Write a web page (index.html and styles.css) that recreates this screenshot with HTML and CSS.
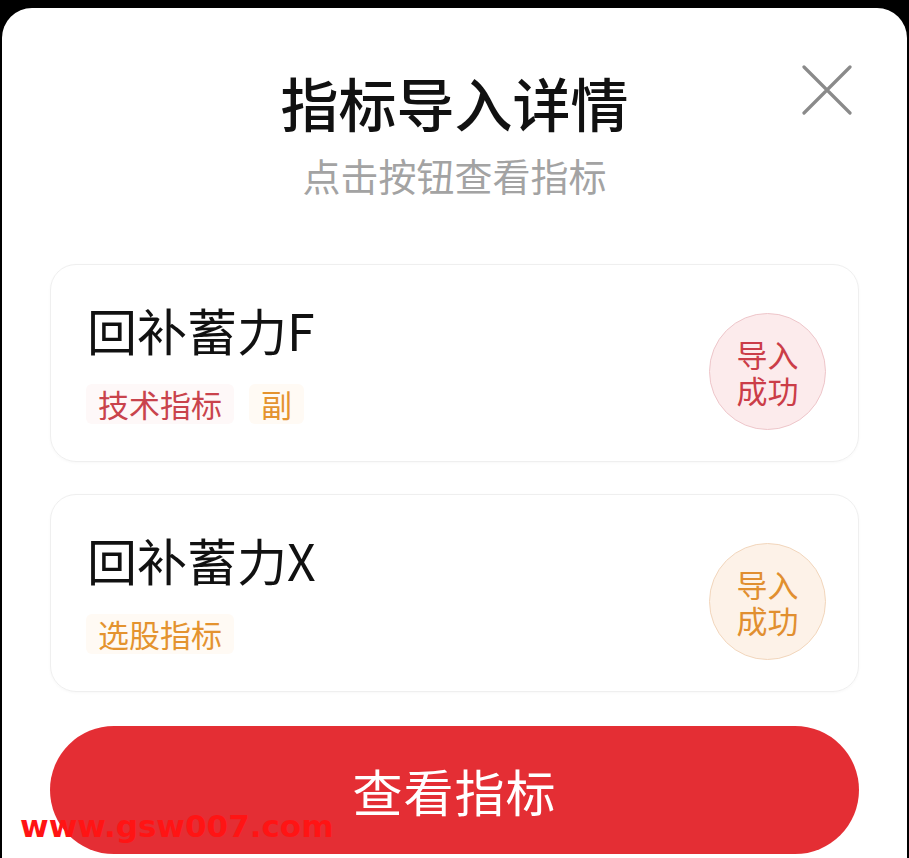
FILE: index.html
```html
<!DOCTYPE html>
<html lang="zh-CN">
<head>
<meta charset="utf-8">
<title>指标导入详情</title>
<link rel="stylesheet" href="styles.css">
</head>
<body>
<div class="modal">
  <button class="close" aria-label="关闭">
    <svg width="50" height="50" viewBox="0 0 50 50"><path d="M2 2 L48 48 M48 2 L2 48" stroke="#8a8a8a" stroke-width="3.2" stroke-linecap="round" fill="none"/></svg>
  </button>
  <h1 class="title">指标导入详情</h1>
  <p class="subtitle">点击按钮查看指标</p>

  <div class="list">
    <div class="card">
      <div class="info">
        <div class="name">回补蓄力F</div>
        <div class="tags">
          <span class="tag tag-red">技术指标</span>
          <span class="tag tag-orange">副</span>
        </div>
      </div>
      <div class="badge badge-red"><span class="bl">导入</span><span class="bl">成功</span></div>
    </div>
    <div class="card">
      <div class="info">
        <div class="name">回补蓄力X</div>
        <div class="tags">
          <span class="tag tag-orange">选股指标</span>
        </div>
      </div>
      <div class="badge badge-orange"><span class="bl">导入</span><span class="bl">成功</span></div>
    </div>
  </div>

  <button class="cta">查看指标</button>
</div>
<div class="watermark">www.gsw007.com</div>
</body>
</html>
```

FILE: styles.css
```css
* { box-sizing: border-box; }
html, body { margin: 0; padding: 0; }
body {
  background: #000;
  width: 909px;
  height: 858px;
  overflow: hidden;
  position: relative;
  font-family: "Noto Sans CJK SC", "Noto Sans", sans-serif;
}
.modal {
  position: relative;
  margin: 8px 2px 0 2px;
  height: 850px;
  background: #fff;
  border-radius: 30px 30px 0 0;
  padding: 65px 48px 0 48px;
}
.close {
  position: absolute;
  top: 57px;
  right: 55px;
  width: 50px;
  height: 50px;
  padding: 0;
  border: 0;
  background: none;
}
.close svg { display: block; }
.title {
  margin: 0;
  text-align: center;
  font-size: 58px;
  line-height: 58px;
  font-weight: 500;
  color: #111;
}
.subtitle {
  margin: 25px 0 0 0;
  text-align: center;
  font-size: 38px;
  line-height: 38px;
  color: #a3a3a3;
}
.list {
  margin-top: 70px;
  display: flex;
  flex-direction: column;
  gap: 32px;
}
.card {
  height: 198px;
  border: 1px solid #efefef;
  border-radius: 26px;
  box-shadow: 0 1px 3px rgba(0,0,0,0.03);
  padding: 39px 32px 0 36px;
  display: flex;
  justify-content: space-between;
  align-items: flex-start;
}
.name {
  font-size: 50px;
  line-height: 50px;
  color: #111;
  font-weight: 400;
}
.tags {
  margin-top: 30px;
  display: flex;
  gap: 15px;
  margin-left: -1px;
}
.tag {
  height: 40px;
  line-height: 40px;
  font-size: 31px;
  padding: 0 12px;
  border-radius: 6px;
}
.tag-red { color: #c9434c; background: #fef8f8; }
.tag-orange { color: #e4932f; background: #fffaf4; }
.badge {
  margin-top: 9px;
  width: 117px;
  height: 117px;
  border-radius: 50%;
  display: flex;
  flex-direction: column;
  align-items: center;
  justify-content: center;
  text-align: center;
  font-size: 31px;
  line-height: 36px;
}
.bl { display: block; height: 36px; }
.badge-red { background: #fcebec; border: 1px solid #eec6ca; color: #cb3d48; }
.badge-orange { background: #fdf2e8; border: 1px solid #f2d6bc; color: #e18f30; }
.cta {
  display: block;
  width: 100%;
  margin-top: 34px;
  height: 128px;
  border: 0;
  border-radius: 64px;
  background: #e42e34;
  color: #fff;
  font-family: "Noto Sans CJK SC", sans-serif;
  font-size: 50px;
  letter-spacing: 1px;
}
.watermark {
  position: absolute;
  left: 20px;
  top: 806px;
  font-family: "DejaVu Sans", sans-serif;
  font-weight: bold;
  font-size: 31px;
  line-height: 40px;
  letter-spacing: 0;
  color: #ff1414;
}
```
